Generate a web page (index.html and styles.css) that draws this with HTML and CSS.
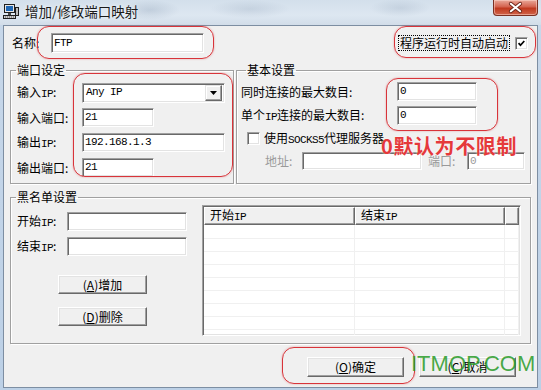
FILE: index.html
```html
<!DOCTYPE html>
<html lang="zh-CN">
<head>
    <meta charset="UTF-8">
    <title>增加/修改端口映射</title>
    <link rel="stylesheet" href="styles.css">
</head>
<body>
    <div class="window">
        <div class="titlebar">
            <svg class="app-icon" viewBox="0 0 16 16">
                <rect x="1.5" y="1.5" width="10" height="8" fill="#e6e6e6" stroke="#1e1e1e"/>
                <rect x="3" y="3" width="7" height="5" fill="#1f68b5"/>
                <rect x="5" y="10" width="3" height="2" fill="#4a4a4a"/>
                <rect x="0.5" y="12.5" width="12" height="3" fill="#cfcfcf" stroke="#1e1e1e"/>
                <line x1="2" y1="14" x2="11" y2="14" stroke="#555" stroke-dasharray="1 1"/>
                <rect x="12.5" y="4.5" width="3" height="8" fill="#bdbdbd" stroke="#1e1e1e"/>
            </svg>
            <span class="title">增加/修改端口映射</span>
            <div class="close-btn">
                <svg viewBox="0 0 45 16">
                    <path d="M17.5 4 L27.5 12 M27.5 4 L17.5 12" stroke="#6b2418" stroke-width="4" stroke-linecap="round"/>
                    <path d="M17.5 4 L27.5 12 M27.5 4 L17.5 12" stroke="#fff" stroke-width="2.2" stroke-linecap="round"/>
                </svg>
            </div>
        </div>

        <div class="client">
            <div class="name-row">
                <span class="label name-label">名称:</span>
                <div class="edit value name-edit">FTP</div>
                <div class="autostart">
                    <span class="focus-text">程序运行时自动启动</span>
                    <span class="check">
                        <svg viewBox="0 0 13 13"><path d="M3 6 L5.3 8.5 L9.8 3.5" fill="none" stroke="#000" stroke-width="2"/></svg>
                    </span>
                </div>
            </div>

            <div class="group-row">
                <fieldset class="group port-group">
                    <legend>端口设定</legend>
                    <div class="port-grid">
                        <span class="label">输入<span class="latin">IP</span>:</span>
                        <div class="combo">
                            <span class="value">Any IP</span>
                            <span class="combo-btn">
                                <svg viewBox="0 0 7 4"><path d="M0 0 H7 L3.5 4 Z" fill="#000"/></svg>
                            </span>
                        </div>
                        <span class="label">输入端口:</span>
                        <div class="edit value short">21</div>
                        <span class="label">输出<span class="latin">IP</span>:</span>
                        <div class="edit value wide">192.168.1.3</div>
                        <span class="label">输出端口:</span>
                        <div class="edit value short">21</div>
                    </div>
                </fieldset>

                <fieldset class="group basic-group">
                    <legend>基本设置</legend>
                    <div class="limit-row">
                        <span class="label limit-label">同时连接的最大数目:</span>
                        <div class="edit value limit">0</div>
                    </div>
                    <div class="limit-row">
                        <span class="label limit-label">单个<span class="latin">IP</span>连接的最大数目:</span>
                        <div class="edit value limit">0</div>
                    </div>
                    <div class="socks-row">
                        <span class="check"></span>
                        <span class="label">使用<span class="latin">SOCKS5</span>代理服务器</span>
                    </div>
                    <div class="proxy-row">
                        <span class="label addr-label">地址:</span>
                        <div class="edit value addr"></div>
                        <span class="label port-label">端口:</span>
                        <div class="edit value proxy-port">0</div>
                    </div>
                </fieldset>
            </div>

            <fieldset class="group blacklist">
                <legend>黑名单设置</legend>
                <div class="blacklist-body">
                    <div class="blacklist-form">
                        <div class="bl-row">
                            <span class="label bl-label">开始<span class="latin">IP</span>:</span>
                            <div class="edit value ip"></div>
                        </div>
                        <div class="bl-row">
                            <span class="label bl-label">结束<span class="latin">IP</span>:</span>
                            <div class="edit value ip"></div>
                        </div>
                        <button class="btn bl-btn btn-add">(<u>A</u>)增加</button>
                        <button class="btn bl-btn btn-del">(<u>D</u>)删除</button>
                    </div>
                    <div class="listview">
                        <table>
                            <colgroup>
                                <col class="col-start">
                                <col class="col-end">
                                <col>
                            </colgroup>
                            <thead>
                                <tr><th>开始<span class="latin">IP</span></th><th>结束<span class="latin">IP</span></th><th></th></tr>
                            </thead>
                            <tbody>
                                <tr class="first"><td></td><td></td><td></td></tr>
                                <tr><td></td><td></td><td></td></tr>
                                <tr><td></td><td></td><td></td></tr>
                                <tr><td></td><td></td><td></td></tr>
                                <tr><td></td><td></td><td></td></tr>
                                <tr><td></td><td></td><td></td></tr>
                                <tr><td></td><td></td><td></td></tr>
                                <tr><td></td><td></td><td></td></tr>
                                <tr><td></td><td></td><td></td></tr>
                            </tbody>
                        </table>
                    </div>
                </div>
            </fieldset>

            <div class="footer">
                <button class="btn dlg-btn">(<u>O</u>)确定</button>
                <button class="btn dlg-btn">(<u>C</u>)取消</button>
            </div>
        </div>

        <!-- red markup added on top of the screenshot -->
        <div class="mark mark-name"></div>
        <div class="mark mark-auto"></div>
        <div class="mark mark-port"></div>
        <div class="mark mark-limit"></div>
        <div class="mark mark-ok"></div>
        <div class="note">0默认为不限制</div>
        <div class="watermark">ITMOP.COM</div>
    </div>
</body>
</html>
```

FILE: styles.css
```css
* {
    box-sizing: border-box;
}

body {
    margin: 0;
    background: #fff;
    font-family: "Noto Sans CJK SC", sans-serif;
    font-size: 12px;
    color: #000;
}

.window {
    position: relative;
    width: 541px;
    height: 390px;
    display: flex;
    flex-direction: column;
    background: linear-gradient(to bottom, #c8d8ea, #bcd0e6);
    overflow: hidden;
}

/* aero title bar */
.titlebar {
    height: 25px;
    flex: none;
    display: flex;
    align-items: flex-start;
    background:
        radial-gradient(ellipse 30px 10px at 150px 10px, rgba(120, 140, 165, 0.25), transparent),
        radial-gradient(ellipse 40px 9px at 250px 9px, rgba(120, 140, 165, 0.2), transparent),
        radial-gradient(ellipse 30px 9px at 400px 8px, rgba(120, 140, 165, 0.2), transparent),
        linear-gradient(to bottom, #d3dfeb, #dde7f1 60%, #d2dde9);
}

.app-icon {
    width: 16px;
    height: 16px;
    margin: 3px 0 0 3px;
}

.title {
    margin: 3px 0 0 6px;
    font-size: 13.5px;
    line-height: 16px;
    color: #1a1a1a;
    text-shadow: 0 0 4px rgba(255, 255, 255, 0.9);
}

.close-btn {
    margin-left: auto;
    margin-right: 3px;
    width: 45px;
    height: 16px;
    border: 1px solid #7b3023;
    border-top: none;
    border-radius: 0 0 4px 4px;
    background: linear-gradient(to bottom, #e9a899, #d4634f 45%, #c0391f 55%, #d1644b);
    box-shadow: inset 0 0 0 1px rgba(255, 220, 210, 0.5);
}

.close-btn svg {
    display: block;
    width: 100%;
    height: 100%;
}

/* dialog client area */
.client {
    flex: 1;
    margin: 0 3px 2px 3px;
    background: #f0f0f0;
    border: 1px solid #7d8ea2;
    display: flex;
    flex-direction: column;
}

.label {
    white-space: nowrap;
    line-height: 14px;
}

.latin {
    font-family: "Liberation Mono", monospace;
    font-size: 11px;
    letter-spacing: -0.6px;
}

.edit {
    height: 19px;
    background: #fff;
    border: 1px solid;
    border-color: #a0a0a0 #fff #fff #a0a0a0;
    box-shadow: inset 1px 1px #696969, inset -1px -1px #e3e3e3;
    padding: 0 2px;
    overflow: hidden;
    white-space: nowrap;
}

.value {
    font-family: "Liberation Mono", monospace;
    font-size: 11px;
    letter-spacing: -0.6px;
    line-height: 17px;
}

.check {
    width: 13px;
    height: 13px;
    flex: none;
    background: #fff;
    border: 1px solid;
    border-color: #a0a0a0 #fff #fff #a0a0a0;
    box-shadow: inset 1px 1px #696969, inset -1px -1px #e3e3e3;
}

.check svg {
    display: block;
    width: 11px;
    height: 11px;
}

.btn {
    font-family: "Noto Sans CJK SC", sans-serif;
    font-size: 12px;
    color: #000;
    background: #f0f0f0;
    border: 1px solid;
    border-color: #fff #696969 #696969 #fff;
    box-shadow: inset -1px -1px #a0a0a0, inset 1px 1px #e3e3e3;
    padding: 0;
    line-height: 14px;
}

.btn u {
    text-underline-offset: 1px;
}

/* name row */
.name-row {
    display: flex;
    align-items: center;
    height: 20px;
    margin-top: 7px;
    padding-left: 8px;
    padding-right: 9px;
}

.name-label {
    width: 39px;
}

.name-edit {
    width: 153px;
    height: 20px;
    line-height: 18px;
}

.autostart {
    margin-left: auto;
    display: flex;
    align-items: center;
    gap: 6px;
}

.focus-text {
    padding: 0 1px;
    line-height: 14px;
    outline: 1px dotted #000;
}

/* group boxes */
.group-row {
    display: flex;
    gap: 2px;
    margin: 10px 6px 0 6px;
}

.group {
    margin: 0;
    padding: 0;
    min-width: 0;
    border: 1px solid #a0a0a0;
    box-shadow: inset 1px 1px #fff, 1px 1px #fff;
}

.group legend {
    margin-left: 5px;
    padding: 0 1px;
    font-size: 12px;
    line-height: 14px;
}

.port-group {
    width: 224px;
    height: 121px;
    flex: none;
}

.port-grid {
    display: grid;
    grid-template-columns: 65px auto;
    grid-auto-rows: 19px;
    row-gap: 6px;
    align-items: center;
    padding: 6px 0 0 6px;
}

.combo {
    width: 143px;
    height: 20px;
    display: flex;
    align-items: center;
    justify-content: space-between;
    background: #fff;
    border: 1px solid;
    border-color: #a0a0a0 #fff #fff #a0a0a0;
    box-shadow: inset 1px 1px #696969, inset -1px -1px #e3e3e3;
    padding: 0 2px 0 3px;
}

.combo-btn {
    width: 17px;
    height: 16px;
    display: flex;
    align-items: center;
    justify-content: center;
    background: #f0f0f0;
    border: 1px solid;
    border-color: #e3e3e3 #696969 #696969 #e3e3e3;
    box-shadow: inset -1px -1px #a0a0a0, inset 1px 1px #fff;
}

.combo-btn svg {
    width: 7px;
    height: 4px;
}

.short {
    width: 72px;
}

.wide {
    width: 143px;
}

.basic-group {
    flex: 1;
    height: 121px;
    padding: 5px 0 0 4px;
}

.limit-row {
    display: flex;
    align-items: center;
    height: 19px;
    margin-bottom: 5px;
}

.limit-label {
    width: 156px;
}

.limit {
    width: 80px;
}

.socks-row {
    display: flex;
    align-items: center;
    gap: 4px;
    height: 13px;
    margin-top: 7px;
    padding-left: 6px;
}

.proxy-row {
    display: flex;
    align-items: center;
    height: 18px;
    margin-top: 7px;
    padding-left: 24px;
    color: #9a9a9a;
}

.proxy-row .edit {
    height: 18px;
    line-height: 16px;
}

.addr-label {
    width: 37px;
}

.addr {
    width: 120px;
}

.port-label {
    width: 39px;
    margin-left: 6px;
}

.proxy-port {
    width: 58px;
}

/* blacklist */
.blacklist {
    height: 154px;
    margin: 6px 6px 0 6px;
}

.blacklist-body {
    display: flex;
    padding-top: 1px;
}

.blacklist-form {
    width: 191px;
    flex: none;
    display: flex;
    flex-direction: column;
    align-items: flex-start;
    padding: 7px 0 0 6px;
}

.bl-row {
    display: flex;
    align-items: center;
    height: 19px;
    margin-bottom: 6px;
}

.bl-label {
    width: 50px;
}

.ip {
    width: 120px;
}

.bl-btn {
    width: 89px;
    height: 19px;
    margin-left: 41px;
}

.btn-add {
    margin-top: 13px;
}

.btn-del {
    margin-top: 13px;
}

.listview {
    width: 319px;
    height: 131px;
    overflow: hidden;
    background: #fff;
    border: 1px solid;
    border-color: #a0a0a0 #fff #fff #a0a0a0;
    box-shadow: inset 1px 1px #696969, inset -1px -1px #e3e3e3;
    padding: 1px;
}

.listview table {
    width: 100%;
    table-layout: fixed;
    border-collapse: separate;
    border-spacing: 0;
}

.col-start {
    width: 151px;
}

.col-end {
    width: 150px;
}

.listview th {
    height: 17px;
    padding: 0 0 0 5px;
    text-align: left;
    font-weight: normal;
    font-size: 12px;
    line-height: 14px;
    background: #f0f0f0;
    border: 1px solid;
    border-color: #fff #696969 #696969 #fff;
    box-shadow: inset -1px -1px #a0a0a0;
}

.listview td {
    height: 13px;
    padding: 0;
    border-right: 1px solid #f0f0f0;
    border-bottom: 1px solid #f0f0f0;
}

.listview tr.first td {
    height: 14px;
}

/* dialog buttons */
.footer {
    display: flex;
    justify-content: flex-end;
    gap: 15px;
    margin-top: 13px;
    padding-right: 21px;
}

.dlg-btn {
    width: 97px;
    height: 20px;
}

/* red markup layer */
.mark {
    position: absolute;
    border: 1.5px solid #d8343a;
    border-radius: 12px;
    box-shadow: 0 0 2px rgba(216, 52, 58, 0.45);
}

.mark-name {
    left: 37px;
    top: 26px;
    width: 177px;
    height: 33px;
}

.mark-auto {
    left: 394px;
    top: 26px;
    width: 142px;
    height: 32px;
}

.mark-port {
    left: 73px;
    top: 73px;
    width: 160px;
    height: 104px;
}

.mark-limit {
    left: 386px;
    top: 78px;
    width: 112px;
    height: 53px;
}

.mark-ok {
    left: 282px;
    top: 347px;
    width: 133px;
    height: 37px;
}

.note {
    position: absolute;
    left: 381px;
    top: 135px;
    font-size: 20px;
    line-height: 22px;
    font-weight: bold;
    letter-spacing: 0.6px;
    color: #e5393b;
    text-shadow: 0 0 2px #fff;
}

.watermark {
    position: absolute;
    left: 411px;
    top: 351px;
    font-family: "Liberation Sans", sans-serif;
    font-size: 22px;
    line-height: 26px;
    color: rgba(40, 155, 40, 0.85);
}
```
